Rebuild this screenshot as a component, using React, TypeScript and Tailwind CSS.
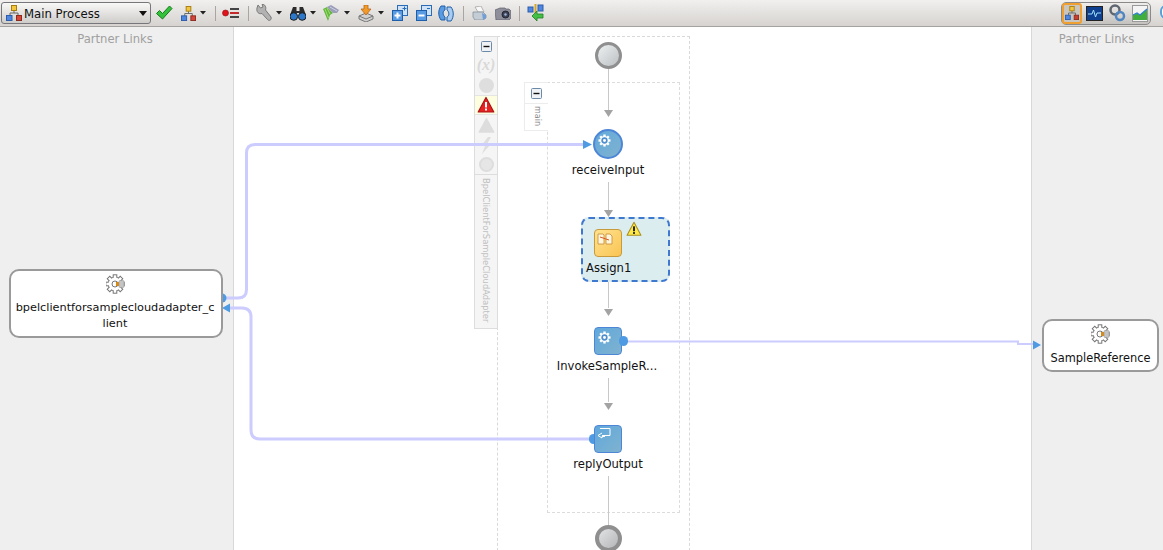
import type { ReactNode } from "react"

const label = "font-['DejaVu_Sans',sans-serif]"

function Caret() {
    return (
        <svg width="6" height="4" viewBox="0 0 6 4">
            <path d="M0 0h6L3 3.500z" fill="#222" />
        </svg>
    )
}

function Separator({ className = "" }: { className?: string }) {
    return <div className={`w-px h-[15px] bg-[#a9a6a2] ${className}`} />
}

function ProcessIcon({ size = 16, hot = false }: { size?: number; hot?: boolean }) {
    return (
        <svg width={size} height={size} viewBox="0 0 16 16">
            <path d="M8 5v3M4 11V8h8v3" fill="none" stroke="#666" strokeWidth="1" />
            <rect x="5.500" y="0.500" width="5" height="5" fill="#f4c63c" stroke="#a67c10" />
            <rect x="0.500" y="10.500" width="5.500" height="5" fill="#4f86e0" stroke="#2d5cab" />
            <rect x="10.500" y="10.500" width="5" height="5" fill={hot ? "#c8402c" : "#d6453a"} stroke="#8c2a20" />
        </svg>
    )
}

function Check() {
    return (
        <svg width="18" height="16" viewBox="0 0 18 16">
            <path d="M1.500 8.500l3-3 3 3L14.500 1l2.500 2.500L7.500 14z" fill="#35c23b" stroke="#157a1c" strokeWidth="1" strokeLinejoin="round" />
        </svg>
    )
}

function Breakpoints() {
    return (
        <svg width="17" height="12" viewBox="0 0 17 12">
            <circle cx="3.500" cy="6" r="3" fill="#e0121a" stroke="#8c1015" strokeWidth="0.600" />
            <rect x="8" y="1" width="9" height="2" fill="#444" />
            <rect x="8" y="5" width="9" height="2" fill="#c42a2a" />
            <rect x="8" y="9" width="9" height="2" fill="#444" />
        </svg>
    )
}

function Wrench() {
    return (
        <svg width="16" height="18" viewBox="0 0 16 18">
            <path d="M2 1l2.500 3L7 3 6 .5C9 0 10.500 3 9.500 6l5.500 7c1 3-2 4.500-3.500 2.500L6 9.500C3 10.500 0 8 1 4z" fill="#b2b2b2" stroke="#7a7a7a" strokeWidth="1" strokeLinejoin="round" />
        </svg>
    )
}

function Binoculars() {
    return (
        <svg width="16" height="15" viewBox="0 0 16 15">
            <path d="M3 1h3.500v4h3V1H13l3 8H9.500V7h-3v2H0z" fill="#2c2c2c" />
            <circle cx="3.800" cy="10.500" r="3.800" fill="#2d78c8" stroke="#1c1c1c" />
            <circle cx="12.200" cy="10.500" r="3.800" fill="#2d78c8" stroke="#1c1c1c" />
        </svg>
    )
}

function GreenFan() {
    return (
        <svg width="16" height="16" viewBox="0 0 16 16">
            <path d="M0 4l5 12 2-6 3-2-6-6z" fill="#62b83c" />
            <path d="M2 4l3.500 9M4 3l3 6" stroke="#a4dc78" strokeWidth="1" />
            <path d="M4 2l4-2 8 5-2 3-4 0z" fill="#9a9cb8" />
            <path d="M7 2l7 4" stroke="#d0d2e2" strokeWidth="1" />
        </svg>
    )
}

function Deploy() {
    return (
        <svg width="16" height="17" viewBox="0 0 16 17">
            <path d="M1 11l7-3 7 3v3l-7 3-7-3z" fill="#cfcfcf" stroke="#777" />
            <path d="M1 11l7 3 7-3" fill="none" stroke="#777" />
            <path d="M6 0h4v4h3L8 10 3 4h3z" fill="#f09a2a" stroke="#b9651a" strokeWidth="0.800" />
        </svg>
    )
}

function ExpandIcon({ minus = false }: { minus?: boolean }) {
    return (
        <svg width="16" height="16" viewBox="0 0 16 16">
            <rect x="5.500" y="0.500" width="10" height="10" fill="#cfe2f6" stroke="#2a6cb8" />
            <rect x="0.500" y="5.500" width="10" height="10" fill="#5a9ce4" stroke="#1f5ea8" />
            <path d="M2.500 10.500h6" stroke="#fff" strokeWidth="2" />
            {!minus && <path d="M5.500 7.500v6" stroke="#fff" strokeWidth="2" />}
            {minus ? <path d="M11 3.500h3" stroke="#2a6cb8" /> : <path d="M12.500 1.500v4M10.500 3.500h4" stroke="#2a6cb8" />}
        </svg>
    )
}

function Refresh() {
    return (
        <svg width="16" height="17" viewBox="0 0 16 17">
            <path d="M3 1C0 5 0 11 3 15h4V12C4.500 10 4.500 6 7 5V1z" fill="#5a9ce4" stroke="#1f5ea8" />
            <path d="M13 16c3-4 3-10 0-14H9v3c2.500 2 2.500 6 0 7v4z" fill="#a9cdf2" stroke="#1f5ea8" />
        </svg>
    )
}

function Printer() {
    return (
        <svg width="15" height="14" viewBox="0 0 15 14">
            <path d="M3 1l6-1 3 6H6z" fill="#f8f8f8" stroke="#999" strokeWidth="0.700" />
            <path d="M1 6h10l3 3v3l-3 2H3L1 11z" fill="#c4ccd6" stroke="#7c8896" strokeWidth="0.700" />
            <path d="M10 7l4 2v3l-3 2z" fill="#6f9fd4" />
        </svg>
    )
}

function Camera() {
    return (
        <svg width="16" height="13" viewBox="0 0 16 13">
            <path d="M0 3l5-2h5l1 1h3l2 2v7l-2 2H1z" fill="#8f8f9c" stroke="#5e5e6a" strokeWidth="0.700" />
            <circle cx="10.500" cy="7.500" r="3.500" fill="#3d4256" stroke="#22242e" />
            <circle cx="10.500" cy="7.500" r="1.200" fill="#9fb4d8" />
        </svg>
    )
}

function SyncIcon() {
    return (
        <svg width="17" height="18" viewBox="0 0 17 18">
            <path d="M8.500 0v14" stroke="#d8a620" strokeWidth="2" />
            <rect x="1" y="3" width="5" height="5" fill="#4f86e0" stroke="#2d5cab" />
            <rect x="11" y="1" width="5" height="6" fill="#4f86e0" stroke="#2d5cab" />
            <path d="M16 10v4h-6v3l-5-5 5-5v3z" fill="#43c043" stroke="#1e7e24" strokeWidth="0.800" />
        </svg>
    )
}

function Monitor() {
    return (
        <svg width="17" height="15" viewBox="0 0 17 15">
            <rect x="0.500" y="0.500" width="16" height="14" fill="#0f3f8f" stroke="#222" />
            <path d="M2 8h4l1.500-4 2 7L11 7h4" fill="none" stroke="#9fe0ff" strokeWidth="1" />
        </svg>
    )
}

function Gears() {
    return (
        <svg width="17" height="18" viewBox="0 0 17 18">
            <circle cx="6" cy="6" r="4.500" fill="none" stroke="#5e6670" strokeWidth="2.500" />
            <circle cx="11" cy="12" r="4" fill="none" stroke="#4f86c0" strokeWidth="2.500" />
        </svg>
    )
}

function Chart() {
    return (
        <svg width="16" height="17" viewBox="0 0 16 17">
            <rect x="0.500" y="0.500" width="15" height="16" fill="#f4f4f4" stroke="#999" />
            <path d="M1 15V10l4-2 3 2 7-6v11z" fill="#3fae3f" />
            <path d="M1 10l4-2 3 2 7-6" fill="none" stroke="#2f7fd0" strokeWidth="1.200" />
        </svg>
    )
}

const teeth = [0, 45, 90, 135]

function Gear() {
    return (
        <svg width="13" height="13" viewBox="0 0 14 14">
            {teeth.map((deg) => (
                <rect key={deg} x="5.700" y="0.500" width="2.600" height="13" fill="#fff" transform={`rotate(${deg} 7 7)`} />
            ))}
            <circle cx="7" cy="7" r="4.800" fill="#fff" />
            <circle cx="7" cy="7" r="3.400" fill="#4f8fd0" />
            <circle cx="7" cy="7" r="1.600" fill="#fff" />
        </svg>
    )
}

// gear with the little orange plug, used on partner link nodes
function PartnerGear() {
    return (
        <svg width="20" height="20" viewBox="0 0 20 20">
            <circle cx="9" cy="10" r="7" fill="#fff" stroke="#777" />
            {teeth.map((deg) => (
                <rect key={deg} x="7.200" y="0.800" width="3.600" height="18.400" fill="#fff" stroke="#777" strokeWidth="1" transform={`rotate(${deg} 9 10)`} />
            ))}
            <circle cx="9" cy="10" r="6.400" fill="#fff" />
            <circle cx="9" cy="10" r="3" fill="#fff" stroke="#777" />
            <rect x="10" y="8" width="3" height="4" fill="#d98a14" />
            <rect x="13" y="6.500" width="5" height="7" rx="1" fill="#c4c4c4" stroke="#999" strokeWidth="0.600" />
        </svg>
    )
}

function MinusBox() {
    return (
        <svg width="11" height="11" viewBox="0 0 11 11">
            <rect x="0.500" y="0.500" width="10" height="10" rx="1" fill="#f0f3f6" stroke="#6c8aa8" />
            <path d="M2.500 5.500h6" stroke="#111" strokeWidth="1.400" />
        </svg>
    )
}

function Warning({ size = 18, fill = "#e82020", stroke = "#a81414", mark = "#fff" }: { size?: number; fill?: string; stroke?: string; mark?: string }) {
    return (
        <svg width={size} height={size} viewBox="0 0 18 18">
            <path d="M9 1.500l7.800 14.500H1.200z" fill={fill} stroke={stroke} strokeWidth="1.200" strokeLinejoin="round" />
            <rect x="8" y="6" width="2" height="5.500" fill={mark} />
            <rect x="8" y="12.500" width="2" height="2" fill={mark} />
        </svg>
    )
}

function NodeLabel({ children, className }: { children: ReactNode; className: string }) {
    return <div className={`absolute text-[11.6px] leading-4 text-center text-[#111] whitespace-nowrap ${label} ${className}`}>{children}</div>
}

function Arrow({ className }: { className: string }) {
    return (
        <svg width="9" height="7" viewBox="0 0 9 7" className={`absolute ${className}`}>
            <path d="M0 0h9L4.500 7z" fill="#a3a3a3" />
        </svg>
    )
}

export default function App() {
    return (
        <div className={`relative w-[1163px] h-[550px] overflow-hidden bg-white flex flex-col ${label}`}>
            {/* toolbar */}
            <div className="h-[27px] shrink-0 flex items-center bg-gradient-to-b from-[#f1f0ee] to-[#d6d3d0] border-b border-[#a5a3a0] pl-px">
                <div className="w-[150px] h-[22px] flex items-center pl-1 pr-[3px] rounded-[3px] border border-[#77767a] bg-gradient-to-b from-[#f8f8f7] to-[#cfcdca]">
                    <ProcessIcon />
                    <span className="ml-[2px] pt-[3px] text-[11.7px] text-[#111] flex-1">Main Process</span>
                    <svg width="8" height="5" viewBox="0 0 8 5"><path d="M0 0h8L4 5z" fill="#111" /></svg>
                </div>
                <div className="ml-1 flex items-center"><Check /></div>
                <div className="ml-2 flex items-center gap-1"><ProcessIcon size={15} /><Caret /></div>
                <Separator className="ml-[9px]" />
                <div className="ml-[6px]"><Breakpoints /></div>
                <Separator className="ml-[9px]" />
                <div className="ml-[7px] flex items-center gap-1"><Wrench /><Caret /></div>
                <div className="ml-2 flex items-center gap-1"><Binoculars /><Caret /></div>
                <div className="ml-[7px] flex items-center gap-[5px]"><GreenFan /><Caret /></div>
                <div className="ml-2 flex items-center gap-1"><Deploy /><Caret /></div>
                <div className="ml-2"><ExpandIcon /></div>
                <div className="ml-2"><ExpandIcon minus /></div>
                <div className="ml-[6px]"><Refresh /></div>
                <Separator className="ml-[9px]" />
                <div className="ml-2"><Printer /></div>
                <div className="ml-2"><Camera /></div>
                <Separator className="ml-2" />
                <div className="ml-[7px]"><SyncIcon /></div>

                <div className="ml-auto mr-3 h-[23px] w-[90px] flex items-center rounded-[5px] border border-[#8b8a8a] bg-gradient-to-b from-[#efeeec] to-[#c4c2bf] gap-[4px]">
                    <div className="w-[20px] h-[21px] flex items-center justify-center rounded-[3px] border-2 border-[#f0a030] bg-[#c9c5bf]">
                        <ProcessIcon size={14} hot />
                    </div>
                    <Monitor />
                    <div className="ml-[2px]"><Gears /></div>
                    <div className="ml-[2px]"><Chart /></div>
                </div>
            </div>

            {/* swimlanes */}
            <div className="flex flex-1 min-h-0">
                <div className="w-[234px] bg-[#efefef] border-r border-[#d8d8d8] pt-[4px] pr-[3px] text-center text-[11.6px] leading-4 text-[#a0a0a0]">Partner Links</div>
                <div className="flex-1 bg-white" />
                <div className="w-[132px] bg-[#efefef] border-l border-[#d8d8d8] pt-[4px] pr-[2px] text-center text-[11.6px] leading-4 text-[#a0a0a0]">Partner Links</div>
            </div>

            {/* free canvas of the process diagram, page coordinates */}
            <div className="absolute left-0 top-0 w-[1163px] h-[550px]">
                <div className="absolute left-[1160px] top-[5px] w-[12px] h-[14px] rounded-full border-2 border-[#5b9fd8] bg-white" />

                {/* outer scope */}
                <div className="absolute left-[497px] top-[36px] w-[193px] h-[530px] border border-dashed border-[#d9d9d9]" />
                <div className="absolute left-[474px] top-[36px] w-[24px] h-[293px] bg-[#f5f5f5] border border-[#dddddd] flex flex-col">
                    <div className="h-[18px] shrink-0 flex items-center justify-center"><MinusBox /></div>
                    <div className="h-5 shrink-0 flex items-center justify-center font-['Liberation_Serif',serif] italic font-bold text-[16px] text-[#d9d9d9]">(x)</div>
                    <div className="h-5 shrink-0 flex items-center justify-center">
                        <div className="w-[15px] h-[15px] rounded-full bg-[#dedede]" />
                    </div>
                    <div className="h-5 shrink-0 flex items-center justify-center bg-[#fdfde0] border-y border-[#e4e4e4]"><Warning /></div>
                    <div className="h-5 shrink-0 flex items-center justify-center"><Warning size={17} fill="#dddddd" stroke="#dddddd" mark="#dddddd" /></div>
                    <div className="h-5 shrink-0 flex items-center justify-center">
                        <svg width="12" height="17" viewBox="0 0 12 17"><path d="M8 0L1 9h4l-3 8 9-10H7l4-7z" fill="#dedede" /></svg>
                    </div>
                    <div className="h-5 shrink-0 flex items-center justify-center border-b border-[#dddddd]">
                        <div className="w-[15px] h-[15px] rounded-full border-2 border-[#dddddd] bg-[#e6e6e6]" />
                    </div>
                    <div className="flex-1 flex items-center pt-[3px] text-[8.4px] leading-3 text-[#c0c0c0] [writing-mode:vertical-rl]">BpelClientForSampleCloudAdapter</div>
                </div>

                {/* main sequence */}
                <div className="absolute left-[547px] top-[82px] w-[133px] h-[431px] border border-dashed border-[#dcdcdc]" />
                <div className="absolute left-[524px] top-[82px] w-[24px] h-[49px] bg-white border-l border-b border-t border-[#ececec] flex flex-col items-center">
                    <div className="h-5 shrink-0 flex items-center"><MinusBox /></div>
                    <div className="w-full flex-1 border-t border-[#ececec] flex items-center pt-[2px] text-[8px] leading-3 text-[#8a8a8a] [writing-mode:vertical-rl]">main</div>
                </div>

                <svg width="1163" height="550" viewBox="0 0 1163 550" className="absolute left-0 top-0">
                    <g stroke="#c8c8c8" strokeWidth="1" fill="none">
                        <path d="M608.500 68v42M608.500 182v28M608.500 282v26M608.500 378v24M608.500 476v50" />
                    </g>
                    <g stroke="#ccccff" fill="none">
                        <path d="M224 298h14q8.500 0 8.500-8.500V153q0-8.500 8.500-8.500h330" strokeWidth="3" />
                        <path d="M228 308h14q9 0 9 9v113q0 9 9 9h332" strokeWidth="3" />
                        <path d="M624 341.500h394v2.500h16" strokeWidth="2" />
                    </g>
                    <g fill="#4f9be3">
                        <path d="M583 140l9 4.500-9 4.500z" />
                        <path d="M230 303.500v9l-8-4.500z" />
                        <path d="M1033 340.500l8 4.500-8 4.500z" />
                        <path d="M222 293.500a4.500 4.500 0 0 1 0 9z" />
                    </g>
                </svg>

                <Arrow className="left-[604px] top-[110px]" />
                <Arrow className="left-[604px] top-[210px]" />
                <Arrow className="left-[604px] top-[309px]" />
                <Arrow className="left-[604px] top-[403px]" />

                <div className="absolute left-[595px] top-[42px] w-[27px] h-[27px] rounded-full border-[3px] border-[#8f8f8f] bg-gradient-to-br from-[#eef1f2] to-[#bcc0c2]" />

                <div className="absolute left-[593px] top-[129px] w-[30px] h-[30px] rounded-full border-2 border-[#4d86d6] bg-gradient-to-br from-[#62a9dc] to-[#7fb2cf] flex pl-[3px] pt-[3px]">
                    <Gear />
                </div>
                <NodeLabel className="left-[568px] w-[80px] top-[162px]">receiveInput</NodeLabel>

                <div className="absolute left-[581px] top-[217px] w-[89px] h-[65px] rounded-[8px] border-2 border-dashed border-[#3f78cf] bg-[#dcedf0]" />
                <div className="absolute left-[594px] top-[229px] w-[28px] h-[28px] rounded-[4px] border border-[#c79a3c] bg-gradient-to-br from-[#ffe38f] to-[#f9c451] flex justify-start pl-[2px] pt-[3px]">
                    <svg width="16" height="12" viewBox="0 0 16 12">
                        <path d="M1 1h5l1 1v9H1zM9 1h4l2 2v8H9z" fill="#fff6dc" stroke="#c48a34" strokeWidth="0.800" />
                        <path d="M3 4l9 3" stroke="#d9572a" strokeWidth="1" />
                    </svg>
                </div>
                <div className="absolute left-[626px] top-[221px]">
                    <Warning size={16} fill="#ffe94a" stroke="#a88f20" mark="#111" />
                </div>
                <NodeLabel className="left-[586px] top-[260px]">Assign1</NodeLabel>

                <div className="absolute left-[594px] top-[327px] w-[28px] h-[28px] rounded-[4px] border border-[#4d86d6] bg-gradient-to-br from-[#5fa8dc] to-[#7fb2cf] flex pl-[3px] pt-[3px]">
                    <Gear />
                </div>
                <div className="absolute left-[619px] top-[336px] w-[9px] h-[10px] rounded-full bg-[#4f9be3]" />
                <NodeLabel className="left-[556px] w-[102px] top-[358px]">InvokeSampleR...</NodeLabel>

                <div className="absolute left-[589px] top-[434px] w-[9px] h-[10px] rounded-full bg-[#4f9be3]" />
                <div className="absolute left-[594px] top-[425px] w-[28px] h-[28px] rounded-[4px] border border-[#4d86d6] bg-gradient-to-br from-[#5fa8dc] to-[#7fb2cf] flex pl-[2px] pt-[1px]">
                    <svg width="14" height="13" viewBox="0 0 14 13">
                        <path d="M3 1.500h10v7H5M5 6l-4 2.500L5 11V9.500h3" fill="none" stroke="#fff" strokeWidth="1" />
                    </svg>
                </div>
                <NodeLabel className="left-[568px] w-[80px] top-[456px]">replyOutput</NodeLabel>

                <div className="absolute left-[595px] top-[525px] w-[27px] h-[27px] rounded-full border-[4px] border-[#8f8f8f] bg-gradient-to-br from-[#e2e3e4] to-[#b4b6b8]" />

                {/* partner link nodes */}
                <div className="absolute left-[9px] top-[269px] w-[214px] h-[69px] rounded-[10px] border-2 border-[#9a9a9a] bg-white flex flex-col items-center pt-[3px]">
                    <PartnerGear />
                    <div className="mt-[6px] w-[206px] pr-[2px] text-center text-[11.3px] leading-[16px] text-[#111]">
                        bpelclientforsamplecloudadapter_c<br />lient
                    </div>
                </div>
                <div className="absolute left-[1042px] top-[319px] w-[117px] h-[53px] rounded-[10px] border-2 border-[#9a9a9a] bg-white flex flex-col items-center pt-[3px]">
                    <PartnerGear />
                    <div className="mt-[6px] text-[11.4px] leading-4 text-[#111]">SampleReference</div>
                </div>
            </div>
        </div>
    )
}
